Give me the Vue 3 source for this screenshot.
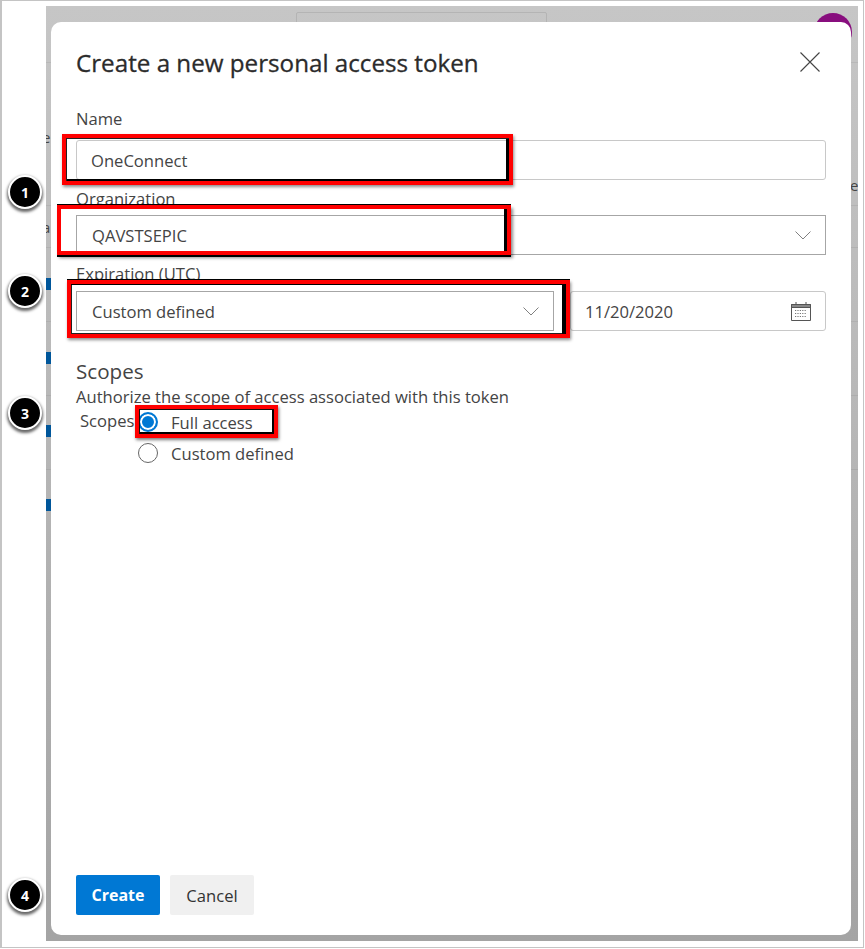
<script setup>
const scopes = [
  { label: 'Full access', checked: true },
  { label: 'Custom defined', checked: false },
]
const bluePins = [278, 352, 425, 499]
const rowLines = [62, 205, 247, 321, 395, 469]
const markers = [
  { n: 1, y: 192 },
  { n: 2, y: 291 },
  { n: 3, y: 413 },
  { n: 4, y: 895 },
]
</script>

<template>
  <div class="frame">
    <div class="backdrop">
      <div class="search"></div>
      <div class="avatar"></div>
      <i v-for="y in rowLines" :key="'l' + y" class="row-line" :style="{ top: y - 6 + 'px' }"></i>
      <span class="ghost ghost-a">e</span>
      <span class="ghost ghost-b">a</span>
      <span class="ghost ghost-c">e</span>
      <i v-for="y in bluePins" :key="y" class="pin" :style="{ top: y - 6 + 'px' }"></i>

      <section class="dialog">
        <header class="head">
          <h1>Create a new personal access token</h1>
          <svg class="close" viewBox="0 0 20 20" width="20" height="20">
            <path d="M0.5 0.5 L19.5 19.5 M19.5 0.5 L0.5 19.5" stroke="#444" stroke-width="1.1" fill="none" />
          </svg>
        </header>

        <div class="field name-field">
          <label>Name</label>
          <div class="control rounded">OneConnect</div>
        </div>

        <div class="field org-field">
          <label>Organization</label>
          <div class="control select">
            <span>QAVSTSEPIC</span>
            <svg class="chev" viewBox="0 0 16 9" width="16" height="9">
              <path d="M0.5 0.5 L8 8 L15.5 0.5" stroke="#808080" stroke-width="1" fill="none" />
            </svg>
          </div>
        </div>

        <div class="field exp-field">
          <label>Expiration (UTC)</label>
          <div class="exp-row">
            <div class="control select exp-select">
              <span>Custom defined</span>
              <svg class="chev" viewBox="0 0 16 9" width="16" height="9">
                <path d="M0.5 0.5 L8 8 L15.5 0.5" stroke="#808080" stroke-width="1" fill="none" />
              </svg>
            </div>
            <div class="control rounded date">
              <span>11/20/2020</span>
              <svg class="cal" viewBox="0 0 20 20" width="20" height="20">
                <path d="M0.5 3.5 H19.5 V19.5 H0.5 Z" fill="none" stroke="#555" />
                <path d="M0.5 3.5 H19.5 V6.5 H0.5 Z" fill="#888" stroke="#555" />
                <path d="M5 1 V4 M15 1 V4" stroke="#555" />
                <path d="M4 9.5 H16 M4 12.5 H16 M4 15.5 H16" stroke="#777" stroke-dasharray="1.2 1.2" />
              </svg>
            </div>
          </div>
        </div>

        <h2>Scopes</h2>
        <p class="desc">Authorize the scope of access associated with this token</p>
        <div class="scopes">
          <span class="scopes-label">Scopes</span>
          <div class="radios">
            <div v-for="s in scopes" :key="s.label" class="radio">
              <span class="dot" :class="{ on: s.checked }"></span>
              <span>{{ s.label }}</span>
            </div>
          </div>
        </div>

        <footer class="foot">
          <button class="btn primary">Create</button>
          <button class="btn">Cancel</button>
        </footer>
      </section>
    </div>

    <div class="hl hl-1"></div>
    <div class="hl hl-2"></div>
    <div class="hl hl-3"></div>
    <div class="hl hl-4"></div>
    <div v-for="m in markers" :key="m.n" class="marker" :style="{ top: m.y - 18 + 'px' }">{{ m.n }}</div>
  </div>
</template>

<style>
html, body { margin: 0; background: #fff; }
</style>

<style scoped>
.frame {
  position: relative;
  box-sizing: border-box;
  width: 864px;
  height: 948px;
  padding: 5px 5px 6px 44px;
  border: 1px solid #c4c4c4;
  border-width: 1px 1px 1px 2px;
  background: #fff;
  font-family: "Open Sans", "Noto Sans", sans-serif;
  color: #333;
  overflow: hidden;
}
.backdrop {
  position: relative;
  box-sizing: border-box;
  height: 935px;
  padding: 16px 7px 6px 5px;
  background: linear-gradient(#c6c6c6, #a4a4a4);
  overflow: hidden;
}
.search {
  position: absolute;
  left: 250px;
  top: 6px;
  width: 249px;
  height: 20px;
  border: 1px solid #b4b4b4;
  border-radius: 2px;
}
.avatar {
  position: absolute;
  left: 768px;
  top: 7px;
  width: 38px;
  height: 38px;
  border-radius: 50%;
  background: #880e7e;
}
.row-line {
  position: absolute;
  left: 0;
  right: 0;
  height: 1px;
  background: rgba(0, 0, 0, 0.06);
}
.ghost { position: absolute; font-size: 15px; color: #444; line-height: 16px; }
.ghost-a { left: -4px; top: 123px; }
.ghost-b { left: -4px; top: 213px; }
.ghost-c { left: 804px; top: 171px; }
.pin { position: absolute; left: 0; width: 5px; height: 12px; background: #00569a; }

.dialog {
  position: relative;
  box-sizing: border-box;
  height: 913px;
  padding: 0 25px 20px;
  display: flex;
  flex-direction: column;
  background: #fff;
  border-radius: 10px;
}
.head {
  box-sizing: border-box;
  display: flex;
  justify-content: space-between;
  align-items: center;
  height: 82px;
  padding-bottom: 2px;
}
.head h1 {
  margin: 0;
  font-size: 24.2px;
  font-weight: 400;
  color: #2b2b2b;
  -webkit-text-stroke: 0.3px #2b2b2b;
}
.close { flex: none; margin-right: 6px; }

.field label {
  display: block;
  font-size: 16.6px;
  line-height: 22px;
  color: #444;
}
.name-field { padding-top: 4px; }
.name-field label { margin-bottom: 10px; }
.org-field { padding-top: 8px; }
.org-field label { height: 27px; }
.exp-field { padding-top: 8px; }
.exp-field label { height: 28px; }

.control {
  box-sizing: border-box;
  height: 40px;
  display: flex;
  align-items: center;
  justify-content: space-between;
  padding: 0 14px 0 15px;
  font-size: 16.6px;
  color: #444;
  background: #fff;
  border: 1px solid #a6a6a6;
}
.rounded { border-color: #c8c8c8; border-radius: 3px; padding-left: 14px; }
.chev { flex: none; }
.exp-row { display: flex; gap: 16px; }
.exp-select { width: 478px; }
.date { flex: 1; }
.cal { flex: none; }

h2 {
  margin: 27px 0 1px;
  font-size: 20.6px;
  line-height: 26px;
  font-weight: 400;
  color: #444;
}
.desc {
  margin: 0;
  font-size: 16.6px;
  line-height: 24px;
  color: #444;
}
.scopes {
  display: flex;
  padding-left: 4px;
  font-size: 16.6px;
  color: #444;
}
.scopes-label { width: 58px; line-height: 24px; }
.radios { display: flex; flex-direction: column; gap: 7px; padding-top: 1px; }
.radio { display: flex; align-items: center; gap: 13px; height: 24px; }
.dot {
  box-sizing: border-box;
  width: 20px;
  height: 20px;
  border-radius: 50%;
  border: 1px solid #666;
  background: #fff;
}
.dot.on {
  border: 2px solid #0078d4;
  background: #0078d4;
  box-shadow: inset 0 0 0 2px #fff;
}
.foot { margin-top: auto; display: flex; gap: 10px; }
.btn {
  box-sizing: border-box;
  width: 84px;
  height: 40px;
  border: 0;
  border-radius: 2px;
  background: #f0f0f0;
  font: 400 16.6px "Open Sans", "Noto Sans", sans-serif;
  color: #333;
}
.btn.primary { background: #0078d4; color: #fff; font-size: 16px; font-weight: 700; }

.hl {
  position: absolute;
  box-sizing: border-box;
  border: 4px solid #f00;
}
.hl-1 {
  left: 60px; top: 133px; width: 451px; height: 51px;
  box-shadow: 1px 2px 3px rgba(0,0,0,.45), inset 1px 1px 0 #222, inset -3px -2px 0 #000;
}
.hl-2 {
  left: 55px; top: 204px; width: 454px; height: 50px;
  box-shadow: 0 -1px 0 #000, 0 2px 0 #000, 2px 3px 3px rgba(0,0,0,.45), inset -3px 0 0 #000;
}
.hl-3 {
  left: 65px; top: 279px; width: 503px; height: 58px;
  box-shadow: 0 -1px 0 #000, 1px 2px 3px rgba(0,0,0,.45), inset -4px 1px 0 #000, inset 1px -1px 0 #222;
}
.hl-4 {
  left: 133px; top: 404px; width: 143px; height: 33px;
  box-shadow: 1px 2px 3px rgba(0,0,0,.5), inset 1px 1px 0 #111, inset -2px -2px 0 #000;
}
.marker {
  position: absolute;
  left: 6px;
  box-sizing: border-box;
  width: 34px;
  height: 34px;
  display: flex;
  align-items: center;
  justify-content: center;
  border-radius: 50%;
  background: #000;
  border: 2px solid #fff;
  box-shadow: 0 2px 3px 1px rgba(0,0,0,.6);
  color: #fff;
  font: 700 14px "Open Sans", sans-serif;
}
</style>
